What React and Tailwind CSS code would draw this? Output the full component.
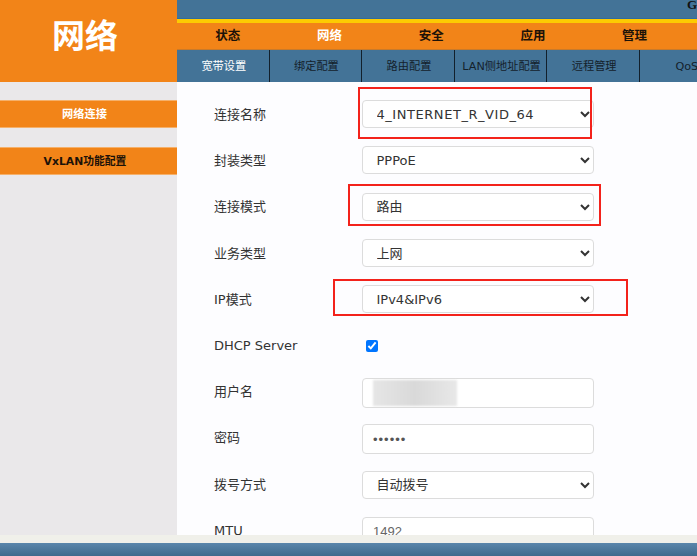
const FONT = '"DejaVu Sans","Noto Sans CJK SC",sans-serif';
const CJK = '"Liberation Sans","Noto Sans CJK SC",sans-serif';

const NAV = [
  ['状态', false],
  ['网络', true],
  ['安全', false],
  ['应用', false],
  ['管理', false],
];
const TABS = ['宽带设置', '绑定配置', '路由配置', 'LAN侧地址配置', '远程管理', 'QoS'];

const fieldClass =
  'h-7 w-[231.5px] rounded-[4px] border border-[#dcdcdc] bg-white pl-[9.5px] text-[13px] text-[#333] outline-none';

function Sel({ value, wide }) {
  return (
    <select
      defaultValue={value}
      className={`${fieldClass} ${wide ? 'tracking-[0.55px]' : 'tracking-[0px]'}`}
      style={{ fontFamily: FONT }}
    >
      <option>{value}</option>
    </select>
  );
}

function Row({ label, children, tight }) {
  return (
    <div className="flex h-[46.3px] shrink-0 items-center">
      <div className={`w-[148px] shrink-0 text-[13px] text-[#333] ${tight ? '' : 'pt-[1px]'}`}>{label}</div>
      {children}
    </div>
  );
}

function Mark({ className }) {
  return <div className={`pointer-events-none absolute border-2 border-[#f3221b] ${className}`} />;
}

export default function App() {
  return (
    <div className="flex h-[556px] w-[697px] flex-col overflow-hidden bg-white" style={{ fontFamily: FONT }}>
      <header className="flex h-[82px] shrink-0">
        <div className="flex w-[177px] shrink-0 items-center justify-center bg-[#f28418] pb-[8px] pr-[7px] text-[33px] font-bold text-white" style={{ fontFamily: CJK }}>
          网络
        </div>
        <div className="flex min-w-0 flex-1 flex-col">
          <div className="flex h-[19px] shrink-0 justify-start border-b border-[#2f6ca0] bg-[#437397] pl-[510px] text-[13px] font-bold leading-[9px] text-[#111]" style={{ fontFamily: '"Liberation Serif",serif' }}>
            G
          </div>
          <div className="h-1 shrink-0 bg-[#fdcb02]" />
          <nav className="flex h-[27px] shrink-0 items-center border-b border-[#c97a2a] bg-[#f28418]">
            {NAV.map(([t, on]) => (
              <div key={t} className={`w-[101.7px] shrink-0 text-center text-[12.5px] font-bold ${on ? 'text-white' : 'text-[#1c1208]'}`} style={{ fontFamily: CJK }}>
                {t}
              </div>
            ))}
          </nav>
          <div className="flex h-[32px] shrink-0 bg-[#437397]">
            {TABS.map((t, i) => (
              <div key={t} className={`flex w-[92.6px] shrink-0 items-center justify-center whitespace-nowrap border-r border-[#12202c] pl-[2px] pt-[3px] text-[11.2px] ${i === 0 ? 'text-white' : 'text-[#14212b]'}`}>
                {t}
              </div>
            ))}
          </div>
        </div>
      </header>

      <div className="flex min-h-0 flex-1">
        <aside className="flex w-[177px] shrink-0 flex-col gap-[19px] bg-[#eae8ea] pt-[18px]">
          <div className="flex h-[28px] items-center justify-center border-y border-[#f5b06a] bg-[#f28418] pr-[8px] pt-[2px] text-[11.2px] font-bold text-white">网络连接</div>
          <div className="flex h-[28px] items-center justify-center border-y border-[#f5b06a] bg-[#f28418] pr-[7px] pt-[2px] text-[10.8px] font-bold text-[#1c1208]">VxLAN功能配置</div>
        </aside>
        <main className="relative min-w-0 flex-1 overflow-hidden bg-[#fdfdff] pl-[37px] pt-[9px]">
          <div className="flex flex-col">
            <Row label="连接名称"><Sel value="4_INTERNET_R_VID_64" wide /></Row>
            <Row label="封装类型"><Sel value="PPPoE" /></Row>
            <Row label="连接模式"><Sel value="路由" /></Row>
            <Row label="业务类型"><Sel value="上网" /></Row>
            <Row label="IP模式"><Sel value="IPv4&IPv6" /></Row>
            <Row label="DHCP Server">
              <input type="checkbox" defaultChecked className="ml-[4px] h-3 w-3 accent-[#0075ff]" />
            </Row>
            <Row label="用户名" tight>
              <div className="relative mt-[2px] h-[30px] w-[231.5px] rounded-[4px] border border-[#dcdcdc] bg-white">
                <div className="absolute left-[10px] top-[1px] h-[26px] w-[84px] bg-gradient-to-r from-[#e6e6e6] via-[#d9d9d9] to-[#e8e8e8] blur-[1px]" />
              </div>
            </Row>
            <Row label="密码" tight>
              <input type="password" readOnly defaultValue="123456" className="mt-[2px] h-[30px] w-[231.5px] rounded-[4px] border border-[#dcdcdc] bg-white px-[10px] text-[13px] tracking-[1px] text-[#555] outline-none" style={{ fontFamily: '"Liberation Sans",sans-serif' }} />
            </Row>
            <Row label="拨号方式" tight><Sel value="自动拨号" /></Row>
            <Row label="MTU" tight>
              <input readOnly defaultValue="1492" className="mt-[2px] h-[30px] w-[231.5px] rounded-[4px] border border-[#dcdcdc] bg-white px-[10px] text-[13px] text-[#666] outline-none" style={{ fontFamily: '"Liberation Sans",sans-serif' }} />
            </Row>
          </div>
          <Mark className="left-[181px] top-[5px] h-[52px] w-[234px]" />
          <Mark className="left-[171px] top-[102px] h-[42px] w-[253px]" />
          <Mark className="left-[156px] top-[197px] h-[37px] w-[295px]" />
        </main>
      </div>

      <div className="h-2 shrink-0 bg-[#f0f0ea]" />
      <footer className="h-[13px] shrink-0 bg-gradient-to-b from-[#5a86ab] to-[#3f6a8c]" />
    </div>
  );
}
